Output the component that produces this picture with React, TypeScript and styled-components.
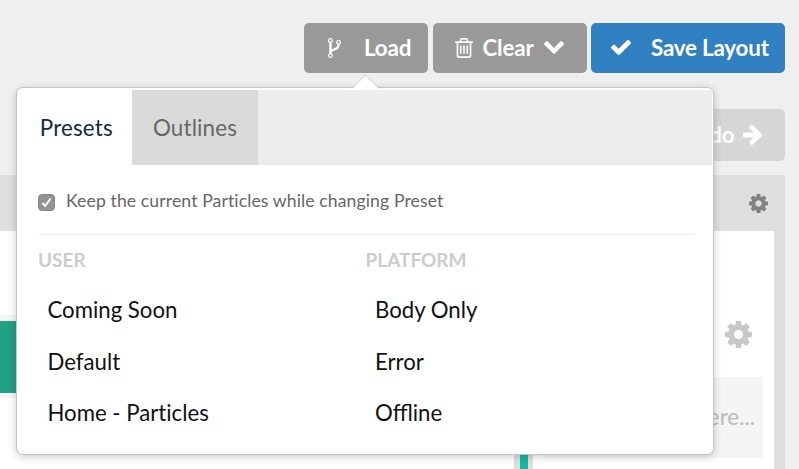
import React from "react";
import styled, { createGlobalStyle } from "styled-components";

const GlobalStyle = createGlobalStyle`
  *, *::before, *::after { box-sizing: border-box; }
  html, body { margin: 0; padding: 0; overflow: hidden; }
  body { font-family: Lato, "Open Sans", sans-serif; background: #efefef; }
  button { font-family: inherit; border: 0; margin: 0; }
`;

const icons = {
  fork: {
    box: "384 128 1024 1536",
    d: "M672 1472q0-40-28-68t-68-28-68 28-28 68 28 68 68 28 68-28 28-68zm0-1152q0-40-28-68t-68-28-68 28-28 68 28 68 68 28 68-28 28-68zm640 128q0-40-28-68t-68-28-68 28-28 68 28 68 68 28 68-28 28-68zm96 0q0 52-26 96.500t-70 69.500q-2 287-226 414-67 38-203 81-128 40-169.500 71t-41.500 100v26q44 25 70 69.500t26 96.500q0 80-56 136t-136 56-136-56-56-136q0-52 26-96.500t70-69.500v-820q-44-25-70-69.500t-26-96.500q0-80 56-136t136-56 136 56 56 136q0 52-26 96.500t-70 69.500v497q54-26 154-57 55-17 87.500-29.500t70.500-31 59-39.500 40.500-51 28-69.500 8.500-91.500q-44-25-70-69.500t-26-96.500q0-80 56-136t136-56 136 56 56 136z",
  },
  trash: {
    box: "192 128 1408 1536",
    d: "M704 736v576q0 14-9 23t-23 9h-64q-14 0-23-9t-9-23v-576q0-14 9-23t23-9h64q14 0 23 9t9 23zm256 0v576q0 14-9 23t-23 9h-64q-14 0-23-9t-9-23v-576q0-14 9-23t23-9h64q14 0 23 9t9 23zm256 0v576q0 14-9 23t-23 9h-64q-14 0-23-9t-9-23v-576q0-14 9-23t23-9h64q14 0 23 9t9 23zm128 724v-948h-896v948q0 22 7 40.500t14.500 27 10.500 8.500h832q3 0 10.500-8.500t14.500-27 7-40.500zm-672-1076h448l-48-117q-7-9-17-11h-317q-10 2-17 11zm928 32v64q0 14-9 23t-23 9h-96v948q0 83-47 143.500t-113 60.500h-832q-66 0-113-58.500t-47-141.500v-952h-96q-14 0-23-9t-9-23v-64q0-14 9-23t23-9h309l70-167q15-37 54-63t79-26h320q40 0 79 26t54 63l70 167h309q14 0 23 9t9 23z",
  },
  chevron: {
    box: "90 533 1612 1035",
    d: "M1683 808l-742 741q-19 19-45 19t-45-19l-742-741q-19-19-19-45.500t19-45.500l166-165q19-19 45-19t45 19l531 531 531-531q19-19 45-19t45 19l166 165q19 19 19 45.500t-19 45.500z",
  },
  check: {
    box: "121 334 1550 1188",
    d: "M1671 566q0 40-28 68l-724 724-136 136q-28 28-68 28t-68-28l-136-136-362-362q-28-28-28-68t28-68l136-136q28-28 68-28t68 28l294 295 656-657q28-28 68-28t68 28l136 136q28 28 28 68z",
  },
  arrow: {
    box: "0 180 1472 1560",
    d: "M1472 960q0 54-37 91l-651 651q-39 37-91 37-51 0-90-37l-75-75q-38-38-38-91t38-91l293-293h-704q-52 0-84.500-37.500t-32.500-90.500v-128q0-53 32.500-90.500t84.500-37.500h704l-293-294q-38-36-38-90t38-90l75-75q38-38 90-38 53 0 91 38l651 651q37 35 37 90z",
  },
  cog: {
    box: "0 128 1536 1536",
    d: "M1024 896q0-106-75-181t-181-75-181 75-75 181 75 181 181 75 181-75 75-181zm512-109v222q0 12-8 23t-20 13l-185 28q-19 54-39 91 35 50 107 138 10 12 10 25t-9 23q-27 37-99 108t-94 71q-12 0-26-9l-138-108q-44 23-91 38-16 136-29 186-7 28-36 28h-222q-14 0-24.500-8.500t-11.500-21.500l-28-184q-49-16-90-37l-141 107q-10 9-25 9-14 0-25-11-126-114-165-168-7-10-7-23 0-12 8-23 15-21 51-66.500t54-70.500q-27-50-41-99l-183-27q-13-2-21-12.500t-8-23.500v-222q0-12 8-23t19-13l186-28q14-46 39-92-40-57-107-138-10-12-10-24 0-10 9-23 26-36 98.500-107.500t94.500-71.500q13 0 26 10l138 107q44-23 91-38 16-136 29-186 7-28 36-28h222q14 0 24.500 8.500t11.500 21.500l28 184q49 16 90 37l142-107q9-9 24-9 13 0 25 10 129 119 165 170 7 8 7 22 0 12-8 23-15 21-51 66.500t-54 70.500q26 50 41 98l183 28q13 2 21 12.500t8 23.500z",
  },
};

const Glyph = styled.svg<{ $w: number; $h: number }>`
  display: block;
  flex: none;
  width: ${(p) => p.$w}px;
  height: ${(p) => p.$h}px;
  fill: currentColor;
`;

function Icon({ name, w, h }: { name: keyof typeof icons; w: number; h: number }) {
  return (
    <Glyph viewBox={icons[name].box} $w={w} $h={h} preserveAspectRatio="none" aria-hidden>
      <path d={icons[name].d} />
    </Glyph>
  );
}

const Page = styled.div`
  position: relative;
  width: 799px;
  height: 469px;
  overflow: hidden;
  background: #efefef;
  display: flex;
  flex-direction: column;
  padding: 22.500px 14px 0 0;
`;

const Toolbar = styled.div`
  display: flex;
  justify-content: flex-end;
  gap: 4.500px;
  height: 50px;
  flex: none;
`;

const Button = styled.button<{ $w: number; $pad: number; $gap: number; $primary?: boolean }>`
  display: flex;
  align-items: center;
  width: ${(p) => p.$w}px;
  padding: 0 0 0 ${(p) => p.$pad}px;
  gap: ${(p) => p.$gap}px;
  border-radius: 5px;
  background: ${(p) => (p.$primary ? "#3180c2" : "#999")};
  color: #fff;
  font-size: 22.400px;
  font-weight: 700;
  letter-spacing: -0.200px;
  line-height: 50px;
  white-space: nowrap;
`;

const HistoryBar = styled.div`
  display: flex;
  justify-content: flex-end;
  flex: none;
  margin: 36.500px 0 14px;
`;

const RedoButton = styled(Button)`
  height: 52px;
  background: #d6d6d6;
`;

const Section = styled.section`
  flex: 1;
  display: flex;
  flex-direction: column;
  background: #dfdfdf;
  padding-right: 11px;
`;

const SectionHeader = styled.header`
  height: 56px;
  flex: none;
  display: flex;
  align-items: center;
  justify-content: flex-end;
  padding-right: 6px;
  color: #828282;
`;

const Canvas = styled.div`
  flex: 1;
  display: flex;
  background: #fff;
`;

const LeftColumn = styled.div`
  width: 514px;
  padding-top: 84px;
`;

const Particle = styled.div`
  height: 83px;
  padding: 6px 0 5px;
  background: #f5f5f5;

  &::before {
    content: "";
    display: block;
    height: 72px;
    background: #22a083;
  }
`;

const Divider = styled.div`
  width: 19px;
  display: flex;
  justify-content: center;
  background: #dedede;

  &::before {
    content: "";
    width: 8px;
    background: #14b8a6;
  }
`;

const RightColumn = styled.div`
  width: 230px;
  padding: 90px 0 0 11px;
  display: flex;
  flex-direction: column;
  color: #c8c8c8;
`;

const ColumnTools = styled.div`
  display: flex;
  justify-content: flex-end;
  padding-right: 11px;
  margin-bottom: 28.500px;
`;

const DropZone = styled.div`
  height: 81px;
  line-height: 79px;
  padding-right: 8px;
  text-align: right;
  background: #f5f5f5;
  color: #bbb;
  font-size: 22.400px;
`;

const Popover = styled.div`
  position: absolute;
  left: 16px;
  top: 87px;
  width: 698px;
  height: 367.500px;
  padding: 2px 1px 1px;
  border: 1px solid #c4c4c4;
  border-radius: 7px;
  background: #fff;
  box-shadow: 0 2px 8px rgba(0, 0, 0, 0.2);
`;

const Pointer = styled.svg`
  position: absolute;
  left: 334px;
  top: -14.500px;
  width: 30px;
  height: 16px;
`;

const Tabs = styled.nav`
  display: flex;
  height: 75px;
  background: #ededed;
`;

const Tab = styled.button<{ $active?: boolean; $w: number }>`
  width: ${(p) => p.$w}px;
  padding: 0 0 0 ${(p) => (p.$active ? 3 : 1)}px;
  text-align: center;
  font-size: 22.400px;
  letter-spacing: 0.150px;
  line-height: 74px;
  background: ${(p) => (p.$active ? "#fff" : "#dadada")};
  color: ${(p) => (p.$active ? "#102a43" : "#666")};
`;

const Body = styled.div`
  padding: 0 19px 0 20px;
`;

const Option = styled.label`
  display: flex;
  align-items: center;
  height: 69.500px;
  padding-top: 3px;
  gap: 11px;
  border-bottom: 1px solid #eee;
  font-size: 17.600px;
  letter-spacing: 0.110px;
  color: #666;
`;

const CheckBox = styled.span`
  width: 17px;
  height: 17px;
  margin-top: 3px;
  border-radius: 4px;
  border: 1px solid #85858a;
  background: #929297;
  display: flex;
  align-items: center;
  justify-content: center;
`;

const Lists = styled.div`
  display: grid;
  grid-template-columns: 327.500px 1fr;
  padding-top: 13.500px;
`;

const Heading = styled.h3`
  margin: 0 0 12px;
  font-size: 19px;
  line-height: 24px;
  font-weight: 700;
  color: #ccc;
`;

const Item = styled.div<{ $ligatures?: boolean }>`
  height: 51.700px;
  padding-left: 9.500px;
  line-height: 51.500px;
  font-size: 22.200px;
  font-variant-ligatures: ${(p) => (p.$ligatures ? "normal" : "none")};
  color: #111;
`;

const groups = [
  { title: "USER", ligatures: false, items: ["Coming Soon", "Default", "Home - Particles"] },
  { title: "PLATFORM", ligatures: true, items: ["Body Only", "Error", "Offline"] },
];

export default function App() {
  return (
    <Page>
      <GlobalStyle />
      <Toolbar>
        <Button $w={124} $pad={24} $gap={23}>
          <Icon name="fork" w={13} h={20} />
          Load
        </Button>
        <Button $w={154} $pad={22} $gap={10}>
          <Icon name="trash" w={18} h={20} />
          Clear
          <Icon name="chevron" w={20} h={13} />
        </Button>
        <Button $w={194} $pad={20} $gap={20} $primary>
          <Icon name="check" w={20} h={15} />
          Save Layout
        </Button>
      </Toolbar>
      <HistoryBar>
        <RedoButton $w={124} $pad={23} $gap={9}>
          Redo
          <Icon name="arrow" w={19} h={20} />
        </RedoButton>
      </HistoryBar>
      <Section>
        <SectionHeader>
          <Icon name="cog" w={19} h={19} />
        </SectionHeader>
        <Canvas>
          <LeftColumn>
            <Particle />
          </LeftColumn>
          <Divider />
          <RightColumn>
            <ColumnTools>
              <Icon name="cog" w={27} h={27} />
            </ColumnTools>
            <DropZone>Drop particles here...</DropZone>
          </RightColumn>
        </Canvas>
      </Section>
      <Popover>
        <Pointer viewBox="0 0 30 16">
          <path d="M0.500 15.500 14.500 1.500 28.500 15.500V16H0.500z" fill="#fff" />
          <path d="M0.500 15 14.500 1 28.500 15" fill="none" stroke="#cbcbcb" strokeWidth="0.800" />
        </Pointer>
        <Tabs>
          <Tab $active $w={113.5}>Presets</Tab>
          <Tab $w={126}>Outlines</Tab>
        </Tabs>
        <Body>
          <Option>
            <CheckBox>
              <svg width="13" height="13" viewBox="0 0 13 13" fill="none" stroke="#fff" strokeWidth="2">
                <path d="M2.500 7 5.300 10 10.500 2.500" />
              </svg>
            </CheckBox>
            Keep the current Particles while changing Preset
          </Option>
          <Lists>
            {groups.map((g) => (
              <div key={g.title}>
                <Heading>{g.title}</Heading>
                {g.items.map((item) => (
                  <Item key={item} $ligatures={g.ligatures}>{item}</Item>
                ))}
              </div>
            ))}
          </Lists>
        </Body>
      </Popover>
    </Page>
  );
}
